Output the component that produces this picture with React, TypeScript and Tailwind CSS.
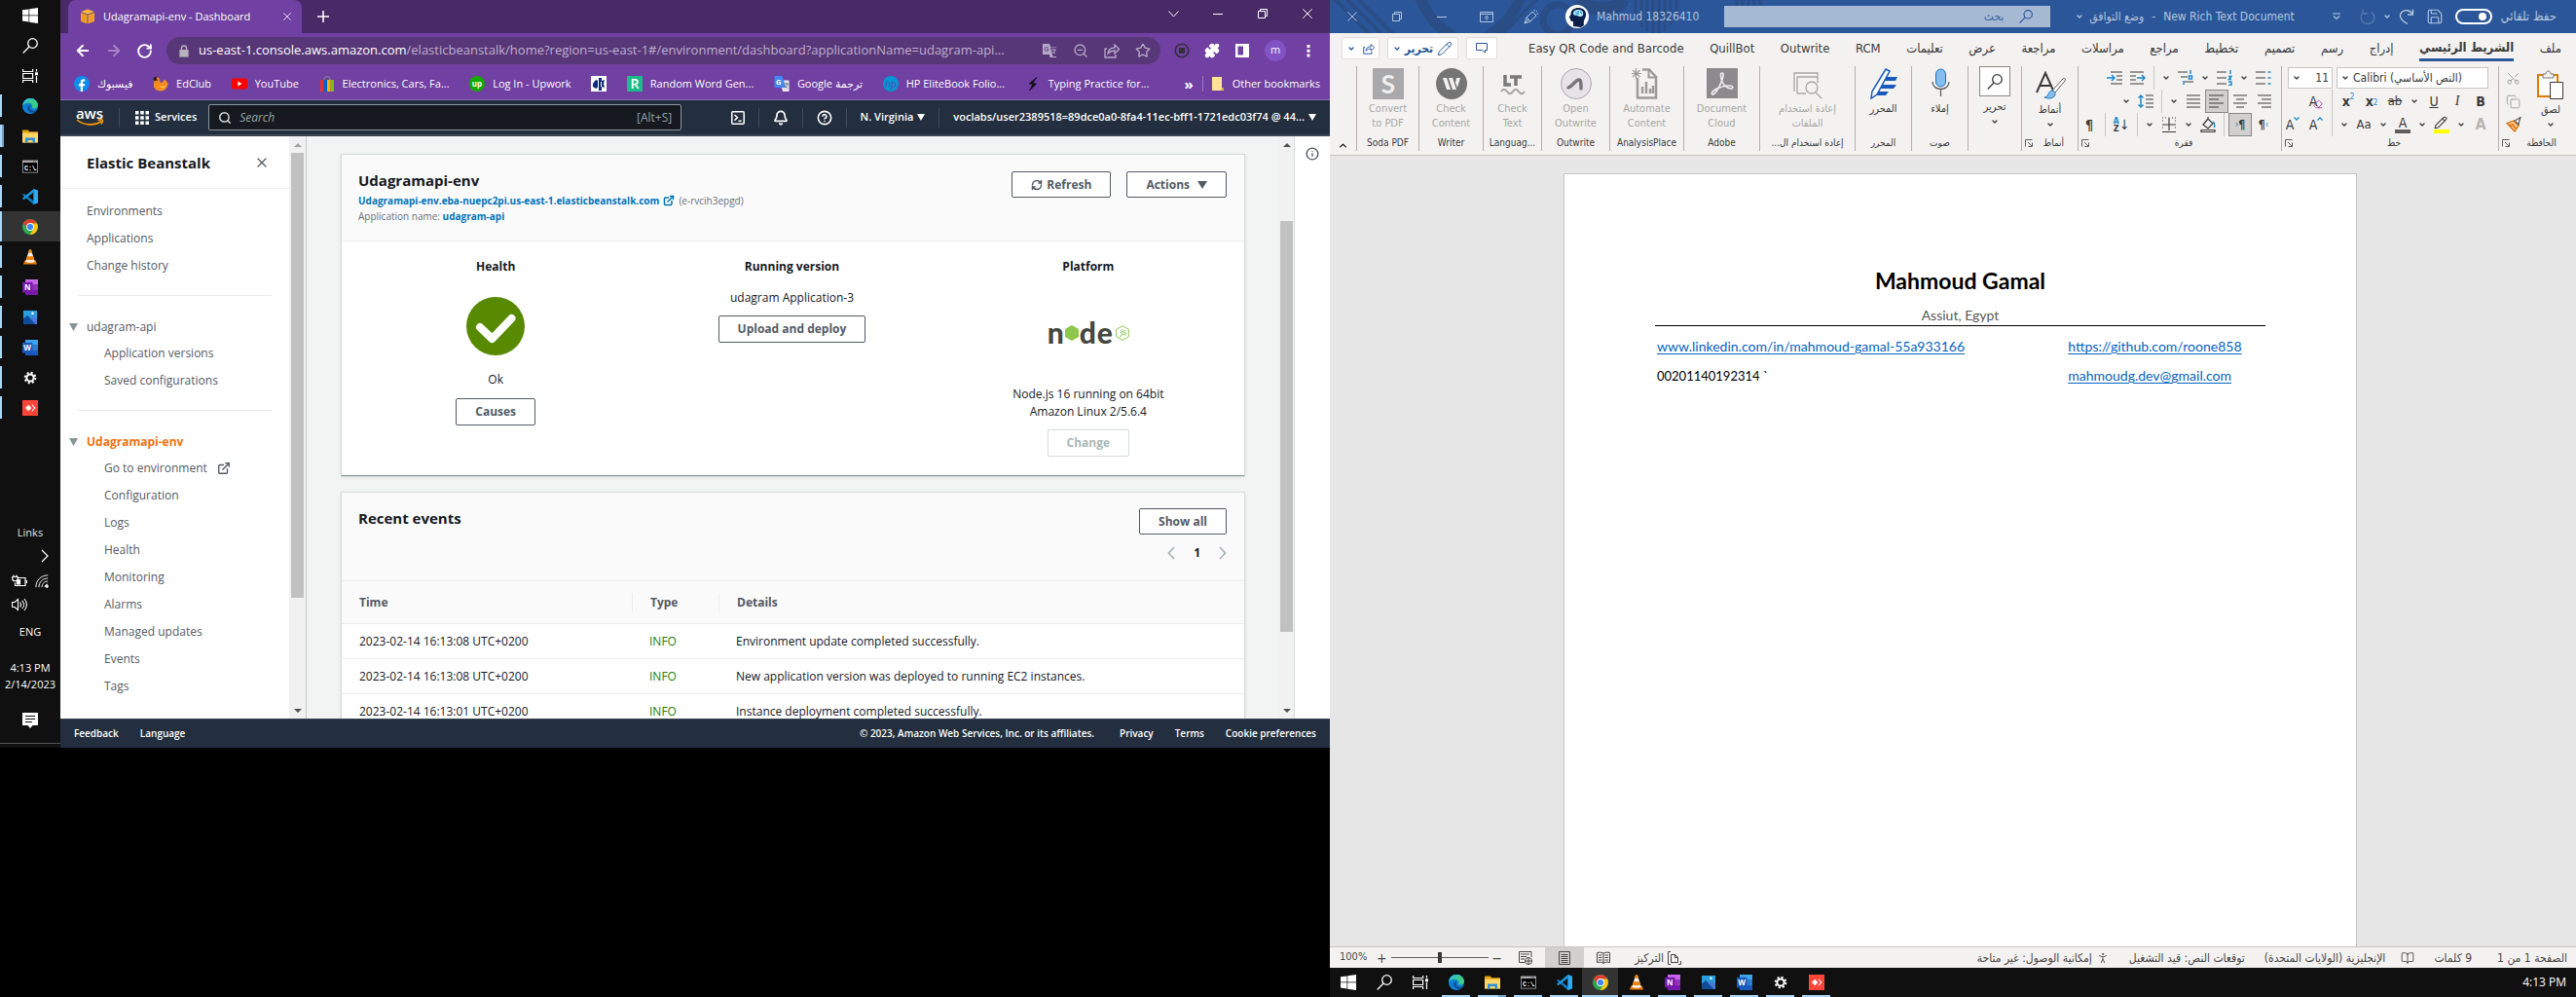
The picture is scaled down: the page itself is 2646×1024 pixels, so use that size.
import React from "react";
import {
  ArrowLeft,
  ArrowRight,
  Bell,
  ChevronDown,
  ChevronUp,
  CircleHelp,
  Copy,
  ExternalLink,
  Eraser,
  Info,
  Pencil,
  PersonStanding,
  Puzzle,
  RefreshCw,
  RotateCw,
  Save,
  Scissors,
  Search,
  Star,
  X,
  ZoomOut,
  BookOpen,
} from "lucide-react";

/* ---------- application icons ---------- */

type IconProps = { className?: string };

const WindowsIcon = () => (
  <svg viewBox="0 0 16 16" className="size-4" fill="#fff">
    <path d="M0 2.300 6.500 1.400v6.200H0zM7.200 1.300 16 0v7.600H7.200zM0 8.300h6.500v6.200L0 13.600zM7.200 8.300H16V16l-8.800-1.300z" />
  </svg>
);

const LoupeIcon = ({ className = "size-4" }: IconProps) => (
  <svg viewBox="0 0 16 16" className={className} fill="none" stroke="currentColor" strokeWidth="1.300">
    <circle cx="10.500" cy="5.500" r="4.800" />
    <path d="M7 9 0.700 15.500" />
  </svg>
);

const TaskViewIcon = () => (
  <svg viewBox="0 0 16 16" className="size-4" fill="none" stroke="#fff" strokeWidth="1.200">
    <path d="M.6 1v2.500h10V1M.6 15v-2.500h10V15M.6 5.500h10v5H.6zM14.500 1v2.500M14.500 8v7" />
    <path d="M13 4.300h3v3h-3z" fill="#fff" stroke="none" />
  </svg>
);

const EdgeIcon = () => (
  <svg viewBox="0 0 16 16" className="size-4">
    <circle cx="8" cy="8" r="8" fill="#0f7fd6" />
    <path d="M.2 7C1 2.800 4.300 0 8 0c5 0 8 3.600 8 6.800 0 2.400-1.800 3.600-3.800 3.600-1.600 0-2.500-.6-2.200-1.300C11 7 9 4.800 6.200 4.800 3.600 4.800 1.200 6 .2 7z" fill="#3ccb8c" />
    <path d="M.2 7C1 2.800 4.300 0 8 0c1.600 0 3 .4 4 1-4-.4-8 2-11.800 6z" fill="#34bfe0" />
    <path d="M5.200 9.500c0 3 2.500 5.500 5.800 5.200 1.600-.2 3-1.200 4-2.700-4 2-8 .5-7.500-3.200.1-.8.500-1.300 1-1.700-2 0-3.300 1-3.300 2.400z" fill="#114a8b" />
  </svg>
);

const ExplorerIcon = () => (
  <svg viewBox="0 0 16 16" className="size-4">
    <path d="M0 1.500h6l1 1.800h9v11H0z" fill="#e5a00d" />
    <path d="M0 4.500h16V14.500H0z" fill="#ffd766" />
    <path d="M3 14.500V9.500h10v5h-2.500V12h-5v2.500z" fill="#2d8fd8" />
  </svg>
);

const TerminalIcon = () => (
  <svg viewBox="0 0 16 16" className="size-4">
    <path d="M0 1.500h16v13H0z" fill="#a8a8a8" />
    <path d="M.8 4h14.400v9.700H.8z" fill="#000" />
    <path d="M11 2.300h1v1h-1zM13 2.300h1v1h-1z" fill="#333" />
    <text x="2" y="11.500" fontSize="6.500" fontFamily="Liberation Mono" fontWeight="700" fill="#fff">C:\</text>
    <path d="M12 10.800h2.500v1H12z" fill="#fff" />
  </svg>
);

const VsCodeIcon = () => (
  <svg viewBox="0 0 16 16" className="size-4">
    <path d="M11.500 0 16 1.800v12.400L11.500 16 0 6.200l1.500-1.400 10 7.600z" fill="#0a7bc4" />
    <path d="M11.500 3.600 1.500 11.200 0 9.800 11.500 0z" fill="#1b9ae0" />
    <path d="M11.500 0 16 1.800v12.400L11.500 16z" fill="#2faaf2" />
  </svg>
);

const ChromeIcon = () => (
  <svg viewBox="0 0 16 16" className="size-4">
    <circle cx="8" cy="8" r="8" fill="#2da94f" />
    <path d="M8 4.200h6.900A8 8 0 0 1 7.700 16l3.600-6.100z" fill="#fdc60a" />
    <path d="M1.100 4A8 8 0 0 1 14.900 4.200H8L4.600 9.900z" fill="#e33b2e" />
    <circle cx="8" cy="8" r="3.900" fill="#fff" />
    <circle cx="8" cy="8" r="3.100" fill="#4286f5" />
  </svg>
);

const VlcIcon = () => (
  <svg viewBox="0 0 16 16" className="size-4">
    <path d="M2.300 11.500h11.400l1.300 4H1z" fill="#e87b00" />
    <path d="M7 .5h2l3.800 12.200c-1.500 1.300-8.100 1.300-9.600 0z" fill="#f4f0ec" />
    <path d="M7 .5h2l1 3.200H6zM4.900 7.200h6.200l1 3.200c-2 .8-6.200.8-8.200 0z" fill="#f08000" />
  </svg>
);

const OfficeTile = ({ letter, dark, mid, light }: { letter: string; dark: string; mid: string; light: string }) => (
  <svg viewBox="0 0 16 16" className="size-4">
    <path d="M3 0h13v16H3z" fill={mid} />
    <path d="M3 0h13v5H3z" fill={light} />
    <path d="M3 11h13v5H3z" fill={dark} />
    <path d="M0 2.800h10.400v10.600H0z" fill={dark} />
    <text x="5.200" y="11" fontSize="8" fontWeight="700" fontFamily="Open Sans" fill="#fff" textAnchor="middle">{letter}</text>
  </svg>
);

const PhotosIcon = () => (
  <svg viewBox="0 0 16 16" className="size-4">
    <path d="M1 1h14v14H1z" fill="#2a9fe0" />
    <path d="m1 9.500 4-3.800L14 15H1z" fill="#0f4c9a" />
    <path d="m8 9 3-3 4 4v5h-1.500z" fill="#4a78d8" />
    <circle cx="10.500" cy="3.800" r="1.200" fill="#fff" />
  </svg>
);

const GearIcon = () => (
  <svg viewBox="0 0 16 16" className="size-4" fill="none" stroke="#fff">
    <circle cx="8" cy="8" r="3.600" strokeWidth="2" />
    <circle cx="8" cy="8" r="5.300" strokeWidth="2" strokeDasharray="2.080 2.080" />
  </svg>
);

const AnyDeskIcon = () => (
  <svg viewBox="0 0 16 16" className="size-4">
    <path d="M0 0h16v16H0z" fill="#ff4438" />
    <path d="m6.200 4.800 3.200 3.200-3.200 3.200L3 8z" fill="#fff" />
    <path d="m9.300 4.800 1-.3L13.500 8l-3.200 3.400-1-.2L12 8z" fill="#fff" />
  </svg>
);

const pinned = [
  { name: "Start", icon: <WindowsIcon />, state: "none" },
  { name: "Search", icon: <span className="text-white"><LoupeIcon /></span>, state: "none" },
  { name: "Task View", icon: <TaskViewIcon />, state: "none" },
  { name: "Edge", icon: <EdgeIcon />, state: "open" },
  { name: "File Explorer", icon: <ExplorerIcon />, state: "multi" },
  { name: "Command Prompt", icon: <TerminalIcon />, state: "open" },
  { name: "Visual Studio Code", icon: <VsCodeIcon />, state: "open" },
  { name: "Chrome", icon: <ChromeIcon />, state: "active" },
  { name: "VLC", icon: <VlcIcon />, state: "open" },
  { name: "OneNote", icon: <OfficeTile letter="N" dark="#7719aa" mid="#9332bf" light="#ca64ea" />, state: "open" },
  { name: "Photos", icon: <PhotosIcon />, state: "open" },
  { name: "Word", icon: <OfficeTile letter="W" dark="#185abd" mid="#2b7cd3" light="#41a5ee" />, state: "open" },
  { name: "Settings", icon: <GearIcon />, state: "open" },
  { name: "AnyDesk", icon: <AnyDeskIcon />, state: "open" },
];

/* ---------- side taskbar ---------- */

function SideTaskbar() {
  return (
    <nav aria-label="Taskbar" className="flex w-[62px] shrink-0 flex-col bg-[#101010] text-[11px] text-white">
      {pinned.map((p) => (
        <button
          key={p.name}
          aria-label={p.name}
          className={
            p.state === "active"
              ? "relative flex h-[31px] shrink-0 items-center justify-center bg-[#333333]"
              : "relative flex h-[31px] shrink-0 items-center justify-center"
          }
        >
          {p.icon}
          {p.state === "active" && <span className="absolute inset-y-0 left-0 w-[2px] bg-[#a6d8ff]" />}
          {p.state === "open" && <span className="absolute inset-y-1 left-0 w-[2px] bg-[#a6d8ff]" />}
          {p.state === "multi" && (
            <span className="absolute inset-y-1 left-0 w-1 border-l-2 border-[#a6d8ff] bg-[#76a2c4]" />
          )}
        </button>
      ))}
      <div className="flex-1" />
      <div className="text-center leading-5 text-[#e4e4e4]">Links</div>
      <button aria-label="Show hidden icons" className="flex h-7 items-center justify-end pr-3">
        <svg viewBox="0 0 8 14" className="h-[14px] w-2" fill="none" stroke="#fff" strokeWidth="1.200"><path d="m1 1 6 6-6 6" /></svg>
      </button>
      <div className="flex h-6 items-center justify-between px-3">
        <svg viewBox="0 0 16 16" className="size-4" fill="none" stroke="#fff" strokeWidth="1.200">
          <path d="M6 4.500h8v8H3.500V9.500M15.500 7v3M2 1.500v2M5 1.500v2M.8 3.500h5.400v2c0 3-5.400 3-5.400 0z" />
          <path d="M5.500 6.500h3v4.500h-3z" fill="#fff" />
        </svg>
        <svg viewBox="0 0 16 16" className="size-[14px]" fill="none" stroke="#fff" strokeWidth="1.100">
          <path d="M1 15C1 7 7 1 15 1M4.500 15c0-6 4.500-10.500 10.500-10.500M8 15c0-4 3-7 7-7M11.500 15c0-2 1.500-3.500 3.500-3.500" />
          <circle cx="14" cy="14" r="1.300" fill="#fff" />
        </svg>
      </div>
      <div className="flex h-6 items-center px-3">
        <svg viewBox="0 0 16 16" className="size-4" fill="none" stroke="#fff" strokeWidth="1.100">
          <path d="M.6 5.500h2.600L6.500 2.500v11L3.200 10.500H.6zM8.500 5.500c1.300 1.500 1.300 3.500 0 5M10.700 3.800c2.400 2.500 2.400 6 0 8.400M13 2c3.200 3.500 3.200 8.500 0 12" />
        </svg>
      </div>
      <div className="pt-[6px] pb-2 text-center leading-5">ENG</div>
      <div className="pt-[10px] text-center leading-[17px]">
        4:13 PM
        <br />
        2/14/2023
      </div>
      <button aria-label="Notifications" className="mt-[10px] flex h-[38px] items-center justify-center">
        <svg viewBox="0 0 16 16" className="size-4">
          <path d="M0 0h16v13h-5.500L8 16l-2.500-3H0z" fill="#fff" />
          <path d="M3 3.500h10M3 6.500h10M3 9.500h7" stroke="#101010" strokeWidth="1.200" />
        </svg>
      </button>
      <div className="mt-1 h-[5px] border-t border-[#555]" />
    </nav>
  );
}

/* ---------- browser ---------- */

const FacebookIcon = () => (
  <svg viewBox="0 0 16 16" className="size-4">
    <circle cx="8" cy="8" r="8" fill="#0d8bf0" />
    <path d="M6.800 16v-5.500H4.900V8.100h1.900V6.600c0-2.200 1.100-3.300 3-3.300.7 0 1.300.1 1.500.1v2.100h-1.100c-.9 0-1.200.5-1.200 1.200v1.400h2.200l-.4 2.400H9V16z" fill="#fff" />
  </svg>
);
const EdClubIcon = () => (
  <svg viewBox="0 0 16 16" className="size-4">
    <path d="M1 3c1-2 4-2.500 5-1 1 1.300.5 3.500 2 4.500 2 1 3-1 3.500-3 2 1 3.500 2 3 3.500 1 0 1.500.5 1.500 1-1 .5-1 2-1.500 3.500-1 2.500-4 4-6.500 4S1.500 14 1 11 2 6 1 3z" fill="#f58a1f" />
    <path d="M.5 3.500C.5 1.500 2.500.5 4.500.8L3.500 3l2 1.500-4 .5z" fill="#2a1a14" />
    <path d="M6 9c2 2.500 5.500 2.500 8 0-1 4-6 5-8 0z" fill="#ffc04a" />
  </svg>
);
const YouTubeIcon = () => (
  <svg viewBox="0 0 16 16" className="size-4">
    <rect y="2.500" width="16" height="11" rx="2" fill="#f00" />
    <path d="m6.300 5.600 4.200 2.400-4.200 2.400z" fill="#fff" />
  </svg>
);
const BagIcon = () => (
  <svg viewBox="0 0 16 16" className="size-4">
    <path d="M5 5V3c0-3 6-3 6 0v2" fill="none" stroke="#8a8a8a" />
    <path d="M1 4h3.500v12H1z" fill="#e53238" />
    <path d="M4.500 4H8v12H4.500z" fill="#0064d2" />
    <path d="M8 4h3.500v12H8z" fill="#f5af02" />
    <path d="M11.500 4H15v12h-3.500z" fill="#86b817" />
  </svg>
);
const UpworkIcon = () => (
  <svg viewBox="0 0 16 16" className="size-4">
    <circle cx="8" cy="8" r="8" fill="#14a800" />
    <text x="8" y="10.500" fontSize="8" fontWeight="700" fontFamily="Open Sans" fill="#fff" textAnchor="middle">up</text>
  </svg>
);
const FistIcon = () => (
  <svg viewBox="0 0 16 16" className="size-4">
    <path d="M0 0h16v16H0z" fill="#fff" />
    <path d="m2 8 3-4 3 1V2h3v3l3-1-1 4 1 4-3-1v4H8v-4l-3 2-3-2z" fill="#0d2a78" />
    <path d="M7 4h1v8H7zM10 6h1v5h-1z" fill="#fff" />
  </svg>
);
const RIcon = () => (
  <svg viewBox="0 0 16 16" className="size-4">
    <path d="M0 0h16v16H0z" fill="#1abc8c" />
    <text x="8" y="13" fontSize="14" fontFamily="Open Sans" fontWeight="600" fill="#fff" textAnchor="middle">R</text>
  </svg>
);
const TranslateIcon = () => (
  <svg viewBox="0 0 16 16" className="size-4">
    <path d="M6 4.500h9.500V16H9z" fill="#e4e6ea" />
    <path d="M.5 0h8l3.500 12H.5z" fill="#4285f4" />
    <text x="4.800" y="8.800" fontSize="7.500" fontWeight="700" fontFamily="Open Sans" fill="#fff" textAnchor="middle">G</text>
    <path d="M10 8h5M12.500 7v1M14 8c-.5 2-2 3.500-3 4M11 9.500c.5 1.300 2 2.500 3 3" stroke="#5b6b7b" fill="none" strokeWidth=".9" />
  </svg>
);
const TranslatePageIcon = () => (
  <svg viewBox="0 0 16 16" className="size-4">
    <path d="M1 1h7l1 3h6v11H8.500L8 12H1z" fill="#b8a8c8" />
    <path d="m9 4.500 2.500 9.500H15V4.500z" fill="#573778" />
    <path d="M10.500 7h4M12.500 6v1M14 7c-.3 1.800-1.500 3-2.500 3.500M11.500 8.500c.4 1.200 1.500 2.200 2.500 2.700" stroke="#b8a8c8" fill="none" />
    <path d="M6.700 5.200C5.500 3.800 3 4.300 3 6.500s2.500 2.700 3.500 1.500c.3-.4.3-.9.300-1.300H5" stroke="#573778" fill="none" />
  </svg>
);
const HpIcon = () => (
  <svg viewBox="0 0 16 16" className="size-4">
    <circle cx="8" cy="8" r="8" fill="#0096d6" />
    <text x="8" y="11.500" fontSize="10" fontStyle="italic" fontFamily="Open Sans" fill="#5a4bb0" textAnchor="middle">hp</text>
  </svg>
);
const BoltIcon = () => (
  <svg viewBox="0 0 16 16" className="size-4">
    <path d="M12 1.500 4 8l4 .3L4.500 15l7-7-4-.5z" fill="#0c0c14" stroke="#0c0c14" strokeWidth=".6" />
  </svg>
);
const BookmarkFolder = () => (
  <svg viewBox="0 0 12 14" className="h-[14px] w-3">
    <path d="M0 0h10v11l2 1v2H0z" fill="#fde293" />
    <path d="M10 11l2 1v2h-3z" fill="#e0b840" />
  </svg>
);

const bookmarks = [
  { label: "فيسبوك", icon: <FacebookIcon /> },
  { label: "EdClub", icon: <EdClubIcon /> },
  { label: "YouTube", icon: <YouTubeIcon /> },
  { label: "Electronics, Cars, Fa...", icon: <BagIcon /> },
  { label: "Log In - Upwork", icon: <UpworkIcon /> },
  { label: "", icon: <FistIcon /> },
  { label: "Random Word Gen...", icon: <RIcon /> },
  { label: "Google ترجمة", icon: <TranslateIcon /> },
  { label: "HP EliteBook Folio...", icon: <HpIcon /> },
  { label: "Typing Practice for...", icon: <BoltIcon /> },
];

const RestoreIcon = ({ className = "size-[10px]" }: IconProps) => (
  <svg viewBox="0 0 10 10" className={className} fill="none" stroke="currentColor">
    <path d="M.5 2.500h7v7h-7zM2.500 2.500v-2h7v7h-2" />
  </svg>
);
const MinimizeIcon = () => (
  <svg viewBox="0 0 10 10" className="size-[10px]" stroke="currentColor">
    <path d="M0 5.500h10" />
  </svg>
);
const CloseIcon = ({ className = "size-[10px]" }: IconProps) => (
  <svg viewBox="0 0 10 10" className={className} stroke="currentColor">
    <path d="m.3.3 9.400 9.400M9.700.3.3 9.700" />
  </svg>
);
const ShareIcon = ({ className = "size-4" }: IconProps) => (
  <svg viewBox="0 0 16 16" className={className} fill="none" stroke="currentColor" strokeWidth="1.300">
    <path d="M3 6H1v9h11v-3M4 11c.5-4 3-6 7-6V2l4.500 4.500L11 11V8C8 8 6 9 4 11z" />
  </svg>
);

function BrowserChrome() {
  return (
    <header className="text-white">
      <div className="flex h-[34px] items-center bg-[#472a66] pl-2">
        <div className="flex h-full w-60 items-center rounded-t-lg bg-[#7040a2] pr-[11px] pl-3 text-[11px]">
          <svg viewBox="0 0 16 16" className="size-4">
            <path d="m1 3 7-2.500L15 3 8 5.500z" fill="#f9b83a" />
            <path d="M1 4l6.500 2.300V15.500L1 13zM15 4 8.500 6.300v9.200L15 13z" fill="#f0a22a" />
            <path d="M4 5v9M12 5v9" stroke="#e08f1a" />
          </svg>
          <span className="ml-2 flex-1">Udagramapi-env - Dashboard</span>
          <button aria-label="Close tab"><CloseIcon className="size-2" /></button>
        </div>
        <button aria-label="New tab" className="ml-4">
          <svg viewBox="0 0 12 12" className="size-3" stroke="#fff" strokeWidth="1.600"><path d="M6 0v12M0 6h12" /></svg>
        </button>
        <div className="flex-1" />
        <div className="flex h-full items-start pt-[9px]">
          <button aria-label="Search tabs" className="flex w-[46px] justify-center pt-[2px]">
            <svg viewBox="0 0 11 7" className="h-[7px] w-[11px]" fill="none" stroke="#fff"><path d="m.5.500 5 5.500 5-5.500" /></svg>
          </button>
          <button aria-label="Minimize" className="flex w-[46px] justify-center"><MinimizeIcon /></button>
          <button aria-label="Restore" className="flex w-[46px] justify-center"><RestoreIcon /></button>
          <button aria-label="Close" className="flex w-[46px] justify-center"><CloseIcon /></button>
        </div>
      </div>
      <div className="flex h-9 items-center gap-[14px] bg-[#7040a2] px-[14px]">
        <button aria-label="Back"><ArrowLeft className="size-[18px]" strokeWidth={2.5} /></button>
        <button aria-label="Forward" className="text-[#a585c6]"><ArrowRight className="size-[18px]" strokeWidth={2.5} /></button>
        <button aria-label="Reload"><RotateCw className="size-[17px]" strokeWidth={2.7} /></button>
        <div className="flex h-7 min-w-0 flex-1 items-center rounded-full bg-[#573778] pr-[10px] pl-3">
          <svg viewBox="0 0 12 14" className="h-[13px] w-3 shrink-0"><path d="M1 5.500h10V13.500H1z" fill="#b9b3bd" /><path d="M3.300 6V3.500c0-3.300 5.400-3.300 5.400 0V6" fill="none" stroke="#b9b3bd" strokeWidth="1.500" /></svg>
          <div role="textbox" aria-label="Address" tabIndex={0} className="ml-[9px] flex-1 text-[13px] whitespace-nowrap text-[#c0afd0]">
            <span className="text-white">us-east-1.console.aws.amazon.com</span>
            /elasticbeanstalk/home?region=us-east-1#/environment/dashboard?applicationName=udagram-api...
          </div>
          <div className="flex gap-4 text-[#b8a8c8]">
            <button aria-label="Translate"><TranslatePageIcon /></button>
            <button aria-label="Zoom"><ZoomOut className="size-4" /></button>
            <button aria-label="Share"><ShareIcon /></button>
            <button aria-label="Bookmark"><Star className="size-4" /></button>
          </div>
        </div>
        <div className="flex items-center gap-[15px]">
          <button aria-label="Recorder extension">
            <svg viewBox="0 0 16 16" className="size-4">
              <circle cx="8" cy="8" r="6.800" fill="none" stroke="#33303a" strokeWidth="1.600" />
              <path d="M5 5h6v6H5z" fill="#33303a" />
            </svg>
          </button>
          <button aria-label="Extensions"><Puzzle className="size-4 fill-white" /></button>
          <button aria-label="Side panel">
            <svg viewBox="0 0 16 16" className="size-4"><path d="M1 1h14v14H1zM3.500 3.500v9H9v-9z" fill="#fff" fillRule="evenodd" /></svg>
          </button>
          <button aria-label="Profile" className="flex size-[22px] items-center justify-center rounded-full bg-[#8153c4] pb-px text-[11px]">m</button>
          <button aria-label="Menu">
            <svg viewBox="0 0 16 16" className="size-4" fill="#fff"><path d="M6.500 2h3v3h-3zM6.500 6.700h3v3h-3zM6.500 11.400h3v3h-3z" /></svg>
          </button>
        </div>
      </div>
      <div className="flex h-[33px] items-center border-b border-[#8f6cb5] bg-[#7040a2] pr-[10px] pl-[14px] text-[11px]">
        <div className="mr-9 flex min-w-0 flex-1 items-center justify-between whitespace-nowrap">
          {bookmarks.map((b, i) => (
            <a key={i} href="#bookmark" aria-label={b.label || "Bookmark"} className="flex items-center gap-2">
              {b.icon}
              {b.label && <span dir="ltr">{b.label}</span>}
            </a>
          ))}
        </div>
        <button className="text-[15px] leading-4 font-bold">»</button>
        <div className="mx-[9px] h-4 w-px bg-[#9a7bbd]" />
        <a href="#other" className="flex items-center gap-[9px] whitespace-nowrap"><BookmarkFolder />Other bookmarks</a>
      </div>
    </header>
  );
}

/* ---------- AWS console ---------- */

const Caret = ({ className = "h-[7px] w-2 shrink-0" }: IconProps) => (
  <svg viewBox="0 0 10 8" preserveAspectRatio="none" className={className} fill="currentColor"><path d="M0 0h10L5 8z" /></svg>
);

function AwsNav() {
  const sep = <div className="h-5 w-px bg-[#414d5c]" />;
  return (
    <nav className="flex h-[37px] shrink-0 items-center border-b-2 border-[#3c4654] bg-[#232f3e] pr-[14px] pl-4 text-[11px] font-semibold whitespace-nowrap text-white">
      <a href="#aws" aria-label="AWS" className="flex w-7 flex-col items-center text-[15px] leading-[11px]">
        <span>aws</span>
        <svg viewBox="0 0 28 8" className="h-2 w-7" fill="none" stroke="#f90" strokeWidth="1.600">
          <path d="M1 1c7 6 18 6.500 25 1.500M22.500 1.500c2-.7 4.500-.8 4.800 0s-.3 2.500-1.500 4" />
        </svg>
      </a>
      <div className="mx-4 h-5 w-px bg-[#414d5c]" />
      <button className="flex items-center gap-[6px]">
        <svg viewBox="0 0 14 14" className="size-[14px]" fill="#fff">
          <path d="M0 0h3.500v3.500H0zM5.250 0h3.500v3.500h-3.500zM10.500 0H14v3.500h-3.500zM0 5.250h3.500v3.500H0zM5.250 5.250h3.500v3.500h-3.500zM10.500 5.250H14v3.500h-3.500zM0 10.500h3.500V14H0zM5.250 10.500h3.500V14h-3.500zM10.500 10.500H14V14h-3.500z" />
        </svg>
        Services
      </button>
      <label className="ml-3 flex h-[27px] w-[486px] items-center rounded-xs border border-[#8b96a0] bg-[#16191f] px-[9px] font-normal text-[#95a0aa]">
        <Search className="size-[14px] text-[#d5dbdb]" strokeWidth={2.5} />
        <input aria-label="Search" placeholder="Search" className="ml-2 min-w-0 flex-1 bg-transparent text-xs italic placeholder:text-[#95a5a6]" />
        <span className="text-xs">[Alt+S]</span>
      </label>
      <div className="flex-1" />
      <div className="flex items-center gap-[14px]">
        <button aria-label="CloudShell">
          <svg viewBox="0 0 14 14" className="size-[14px]" fill="none" stroke="#fff" strokeWidth="1.500">
            <rect x=".8" y=".8" width="12.400" height="12.400" rx="1" />
            <path d="m3.500 4 3 2.800-3 2.800M7.500 10.200h3" />
          </svg>
        </button>
        {sep}
        <button aria-label="Notifications"><Bell className="size-4" strokeWidth={2.6} /></button>
        {sep}
        <button aria-label="Help"><CircleHelp className="size-4" strokeWidth={2.4} /></button>
        {sep}
        <button className="flex items-center gap-1">N. Virginia <Caret /></button>
        {sep}
        <button className="flex items-center gap-1">voclabs/user2389518=89dce0a0-8fa4-11ec-bff1-1721edc03f74 @ 44... <Caret /></button>
      </div>
    </nav>
  );
}

const envLinks = ["Configuration", "Logs", "Health", "Monitoring", "Alarms", "Managed updates", "Events", "Tags"];

const TreeCaret = () => (
  <svg viewBox="0 0 9 8" className="-ml-[9px] h-2 w-[9px]" fill="#879596"><path d="M0 0h9L4.500 8z" /></svg>
);

const ScrollArrow = ({ up, className }: { up?: boolean; className: string }) => (
  <div className={className}>
    <svg viewBox="0 0 8 4" className="h-1 w-2" fill="currentColor"><path d={up ? "M0 4h8L4 0z" : "M0 0h8L4 4z"} /></svg>
  </div>
);

function ConsoleSidebar() {
  return (
    <aside className="flex w-[253px] shrink-0 border-r border-[#c6cccc] bg-white text-[#545b64]">
      <div className="flex-1 overflow-hidden text-xs">
        <div className="flex h-[54px] items-center justify-between border-b border-[#eaeded] pr-5 pl-[27px]">
          <h2 className="text-[15px] font-bold text-[#16191f]">Elastic Beanstalk</h2>
          <button aria-label="Close navigation"><X className="size-4" strokeWidth={1.8} /></button>
        </div>
        <ul className="mx-[18px] border-b border-[#eaeded] pt-[9px] pb-4 pl-[9px] leading-7">
          <li><a href="#environments">Environments</a></li>
          <li><a href="#applications">Applications</a></li>
          <li><a href="#history">Change history</a></li>
        </ul>
        <div className="mx-[18px] border-b border-[#eaeded] pt-[18px] pb-4 pl-[9px] leading-7">
          <button className="flex items-center gap-[9px] leading-[27px]"><span className="-ml-[9px]"><TreeCaret /></span>udagram-api</button>
          <ul className="pl-[18px]">
            <li><a href="#versions">Application versions</a></li>
            <li><a href="#saved">Saved configurations</a></li>
          </ul>
        </div>
        <div className="mx-[18px] pt-[18px] pl-[9px] leading-7">
          <button className="flex items-center gap-[9px] leading-[27px] font-bold text-[#ec7211]"><span className="-ml-[9px]"><TreeCaret /></span>Udagramapi-env</button>
          <ul className="pl-[18px]">
            <li><a href="#goto" className="flex items-center gap-[10px]">Go to environment <ExternalLink className="size-[14px]" strokeWidth={2.4} /></a></li>
            {envLinks.map((l) => (
              <li key={l}><a href="#env">{l}</a></li>
            ))}
          </ul>
        </div>
      </div>
      <div className="flex w-[17px] flex-col items-center bg-[#f1f1f1]">
        <ScrollArrow up className="flex h-[17px] items-center text-[#a3a3a3]" />
        <div className="h-[457px] w-[13px] bg-[#c1c1c1]" />
        <div className="flex-1" />
        <ScrollArrow className="flex h-[17px] items-center text-[#505050]" />
      </div>
    </aside>
  );
}

const btn = "flex items-center justify-center rounded-xs border border-[#545b64] bg-white px-[19px] text-xs font-bold text-[#545b64]";

const events = [
  ["2023-02-14 16:13:08 UTC+0200", "Environment update completed successfully."],
  ["2023-02-14 16:13:08 UTC+0200", "New application version was deployed to running EC2 instances."],
  ["2023-02-14 16:13:01 UTC+0200", "Instance deployment completed successfully."],
];

function NodeLogo() {
  return (
    <div role="img" aria-label="node js" className="flex h-6 items-end justify-center gap-px font-['Lato'] text-[30px] leading-[20px] font-black text-[#46483e]">
      <span>n</span>
      <svg viewBox="0 0 14 16" className="mb-px h-4 w-[14px]"><path d="m7 0 7 4v8l-7 4-7-4V4z" fill="#8cc84b" /></svg>
      <span>d</span>
      <span>e</span>
      <svg viewBox="0 0 14 16" className="mb-px ml-[2px] h-4 w-[14px]" fill="none" stroke="#8cc84b">
        <path d="m7 .7 6.300 3.600v7.400L7 15.300.7 11.700V4.300z" />
        <path d="M6 4.500v6c0 1-1.500 1.200-2.200.4M10.500 6c-1-.8-3-.6-3 .5 0 1.400 3.200.8 3.200 2.300 0 1.400-2.600 1.400-3.500.4" />
      </svg>
    </div>
  );
}

function ConsoleMain() {
  return (
    <main className="min-w-0 flex-1 overflow-hidden bg-[#f2f3f3] px-[35px] pt-[18px] text-xs text-[#16191f]">
      <section className="border-t border-r border-b border-l border-[#d5dbdb] border-b-[#879596] bg-white shadow-sm">
        <div className="flex h-[89px] items-start justify-between border-b border-[#eaeded] bg-[#fafafa] pt-4 pr-[18px] pl-[17px]">
          <div className="text-[10px] leading-4 text-[#687078]">
            <h1 className="text-[15px] leading-5 font-bold text-[#16191f]">Udagramapi-env</h1>
            <div className="flex items-center gap-1 pt-[3px]">
              <a href="#env" className="font-bold text-[#0073bb]">Udagramapi-env.eba-nuepc2pi.us-east-1.elasticbeanstalk.com</a>
              <ExternalLink className="size-3 text-[#0073bb]" strokeWidth={3} />
              <span>(e-rvcih3epgd)</span>
            </div>
            <div>Application name: <a href="#app" className="font-bold text-[#0073bb]">udagram-api</a></div>
          </div>
          <div className="flex gap-4 pt-px">
            <button className={btn + " h-[27px] gap-1"}><RefreshCw className="size-3" strokeWidth={3} />Refresh</button>
            <button className={btn + " h-[27px] gap-2"}>Actions <Caret className="h-2 w-[10px] shrink-0" /></button>
          </div>
        </div>
        <div className="grid h-60 grid-cols-3 pt-[17px] pr-2 pl-[6px] text-center">
          <div className="flex flex-col items-center">
            <h3 className="leading-[18px] font-bold">Health</h3>
            <svg viewBox="0 0 60 60" className="mt-[22px] size-[60px]">
              <circle cx="30" cy="30" r="30" fill="#578a00" />
              <path d="M14 31 26.500 43 46.500 22" fill="none" stroke="#fff" strokeWidth="8" strokeLinecap="round" strokeLinejoin="round" />
            </svg>
            <p className="mt-4 leading-[18px]">Ok</p>
            <button className={btn + " mt-[10px] h-7"}>Causes</button>
          </div>
          <div className="flex flex-col items-center">
            <h3 className="leading-[18px] font-bold">Running version</h3>
            <p className="mt-[14px] leading-[18px]">udagram Application-3</p>
            <button className={btn + " mt-[9px] h-7"}>Upload and deploy</button>
          </div>
          <div className="flex flex-col items-center">
            <h3 className="leading-[18px] font-bold">Platform</h3>
            <div className="mt-[44px]"><NodeLogo /></div>
            <p className="mt-[45px] leading-[18px]">Node.js 16 running on 64bit<br />Amazon Linux 2/5.6.4</p>
            <button disabled className="mt-[9px] flex h-7 items-center rounded-xs border border-[#d5dbdb] px-[19px] font-bold text-[#aab7b8]">Change</button>
          </div>
        </div>
      </section>
      <section className="mt-4 border border-[#d5dbdb] bg-[#fafafa] shadow-sm">
        <div className="flex h-[90px] items-start justify-between pt-4 pr-[18px] pl-[17px]">
          <h2 className="text-[15px] leading-5 font-bold">Recent events</h2>
          <div className="flex flex-col items-end">
            <button className={btn + " h-[27px]"}>Show all</button>
            <div className="mt-[10px] flex items-center gap-[19px] text-[#aab7b8]">
              <button aria-label="Previous page"><svg viewBox="0 0 8 14" className="h-[14px] w-2" fill="none" stroke="currentColor" strokeWidth="1.800"><path d="M7 1 1.500 7 7 13" /></svg></button>
              <span className="leading-[18px] font-bold text-[#16191f]">1</span>
              <button aria-label="Next page"><svg viewBox="0 0 8 14" className="h-[14px] w-2" fill="none" stroke="currentColor" strokeWidth="1.800"><path d="m1 1 5.500 6L1 13" /></svg></button>
            </div>
          </div>
        </div>
        <table className="w-full table-fixed border-t border-[#eaeded] text-left">
          <thead>
            <tr className="h-11 text-[#545b64]">
              <th className="w-[298px] pl-[18px] font-bold">Time</th>
              <th className="w-[89px]"><div className="border-l border-[#eaeded] pl-[18px] leading-5">Type</div></th>
              <th><div className="border-l border-[#eaeded] pl-[18px] leading-5">Details</div></th>
            </tr>
          </thead>
          <tbody className="bg-white">
            {events.map(([time, details]) => (
              <tr key={details} className="h-9 border-t border-[#eaeded]">
                <td className="pl-[18px]">{time}</td>
                <td className="pl-[18px] text-[#1d8102]">INFO</td>
                <td className="pl-[18px]">{details}</td>
              </tr>
            ))}
          </tbody>
        </table>
      </section>
    </main>
  );
}

function Browser() {
  return (
    <div className="flex min-w-0 flex-1 flex-col">
      <BrowserChrome />
      <AwsNav />
      <div className="flex min-h-0 flex-1">
        <ConsoleSidebar />
        <ConsoleMain />
        <div className="flex w-4 flex-col items-center border-r border-[#d5dbdb] bg-[#f1f1f1]">
          <ScrollArrow up className="flex h-[17px] items-center text-[#505050]" />
          <div className="mt-[70px] h-[422px] w-[13px] bg-[#c1c1c1]" />
          <div className="flex-1" />
          <ScrollArrow className="flex h-[17px] items-center text-[#505050]" />
        </div>
        <div className="flex w-9 justify-center bg-white pt-[11px] text-[#545b64]">
          <button aria-label="Info" className="h-[14px]"><Info className="size-[14px]" strokeWidth={2.4} /></button>
        </div>
      </div>
      <footer className="flex h-[30px] shrink-0 items-center gap-[22px] border-t border-[#3c4654] bg-[#232f3e] px-[14px] text-[10px] font-semibold text-white">
        <a href="#feedback">Feedback</a>
        <a href="#language">Language</a>
        <span className="ml-auto pr-1">© 2023, Amazon Web Services, Inc. or its affiliates.</span>
        <a href="#privacy">Privacy</a>
        <a href="#terms">Terms</a>
        <a href="#cookies">Cookie preferences</a>
      </footer>
    </div>
  );
}

/* ---------- word processor ---------- */

function WordTitleBar() {
  return (
    <header className="relative flex h-[34px] shrink-0 items-center overflow-hidden bg-[#2b579a] text-xs whitespace-nowrap text-[#b4c5df]">
      <svg aria-hidden="true" className="absolute inset-y-0 left-0 h-[34px] w-[500px]" viewBox="0 0 500 34" fill="none" stroke="#2a4d85">
        <path d="m0-6 44 44M12-6l44 44M24-6l44 44" strokeWidth="4" />
        <path d="M92-4c6 18 18 32 36 42M196-4c-6 18-18 32-36 42" strokeWidth="11" />
        <path d="m160 40 44-44M172 40l44-44" strokeWidth="3" />
        <circle cx="234" cy="20" r="15" strokeWidth="7" />
        <path d="M258 0c2 12 40 12 42 0" strokeWidth="14" />
        <path d="M314 0v22M320 0v28M326 0v32M332 0v34M338 0v34M344 0v32M350 0v26M356 0v20M418 0v14M424 0v14M430 0v14M436 0v10M442 0v6" strokeWidth="3" />
      </svg>
      <div className="relative flex w-full items-center pr-5">
        <div className="flex items-center">
          <button aria-label="Close" className="flex w-[46px] justify-center"><CloseIcon /></button>
          <button aria-label="Restore" className="flex w-[46px] justify-center"><RestoreIcon /></button>
          <button aria-label="Minimize" className="flex w-[46px] justify-center"><MinimizeIcon /></button>
          <button aria-label="Ribbon options" className="flex w-[46px] justify-center">
            <svg viewBox="0 0 14 11" className="h-[11px] w-[14px]" fill="none" stroke="currentColor"><path d="M.5.500h13v10H.5zM.5 2.500h13M7 9V4.500M5 6.500l2-2 2 2" /></svg>
          </button>
          <button aria-label="Drawing" className="flex w-[46px] justify-center">
            <svg viewBox="0 0 16 16" className="size-4" fill="none" stroke="currentColor"><path d="M1 15 3 9l6-6 4 4-6 6zM3 9l4 4M11 1l.5 1.500M14 2l-1 1M15 5h-1.500M1 15l4-4" /></svg>
          </button>
        </div>
        <button className="ml-3 flex items-center gap-2">
          <svg viewBox="0 0 24 24" className="size-6">
            <circle cx="12" cy="12" r="12" fill="#fff" />
            <path d="M8 22v-5c-3 0-3-1-3-3l-1.500-1 2-3C5.500 5 9 3 13.500 3 19 3 21.500 7 21 11c-.4 3-3 5-2 10l-3 2z" fill="#0b1f4b" />
            <path d="M8 9c0-3 3-4.500 6-4 3 .4 4.500 2 4.300 4.500-.2 2-2 2.500-3.500 2.500l-3-1c-2 0-3.800-.5-3.800-2z" fill="#bfeaff" />
            <path d="M10 8h3M13 6v4M15 7l2 2M10 10h2" stroke="#1596d8" strokeWidth="1.200" />
          </svg>
          <span>Mahmud 18326410</span>
        </button>
        <label className="ml-[26px] flex h-[22px] w-[335px] items-center justify-end gap-4 bg-[#a6b9d3] pr-[18px] text-[#2b579a]">
          <input dir="rtl" aria-label="بحث" placeholder="بحث" className="min-w-0 flex-1 bg-transparent text-xs placeholder:text-[#3c66a3]" />
          <LoupeIcon className="size-[14px]" />
        </label>
        <button className="ml-[26px] flex items-center gap-[6px]"><ChevronDown className="size-2" strokeWidth={4} /><span>وضع التوافق</span></button>
        <span className="px-2">-</span>
        <span>New Rich Text Document</span>
        <div className="flex-1" />
        <div className="flex items-center gap-2">
          <button aria-label="Customize" className="mr-3">
            <svg viewBox="0 0 8 8" className="size-2" fill="none" stroke="currentColor" strokeWidth="1.200"><path d="M0 1h8M1 3.500l3 3 3-3" /></svg>
          </button>
          <button aria-label="Repeat" className="text-[#5579ae]">
            <svg viewBox="0 0 16 16" className="size-4" fill="none" stroke="currentColor" strokeWidth="1.300"><path d="M3 .5v4.500h5M3.500 4C-2 9 3 15.500 8 15.500s10.500-7 3.500-12" /></svg>
          </button>
          <button aria-label="Undo options"><ChevronDown className="size-2" strokeWidth={4} /></button>
          <button aria-label="Undo">
            <svg viewBox="0 0 16 16" className="size-4" fill="none" stroke="currentColor" strokeWidth="1.300"><path d="M9 6h5.500V.5M14.500 6C12 1 6 .5 3 3.500S1 11 9 15.500" /></svg>
          </button>
          <button aria-label="Save" className="mx-1"><Save className="size-[18px]" strokeWidth={1.5} /></button>
          <input type="checkbox" role="switch" id="autosave" className="relative h-4 w-[38px] appearance-none rounded-full border-2 border-white after:absolute after:top-[2px] after:right-1 after:size-2 after:rounded-full after:bg-white" />
          <label htmlFor="autosave" className="text-[13px]">حفظ تلقائي</label>
        </div>
      </div>
    </header>
  );
}

const wordTabs = [
  "Easy QR Code and Barcode", "QuillBot", "Outwrite", "RCM", "تعليمات", "عرض", "مراجعة", "مراسلات", "مراجع", "تخطيط", "تصميم", "رسم", "إدراج",
];

function WordTabs() {
  const box = "flex h-[23px] items-center justify-center rounded-xs border border-[#e1dfdd] bg-white text-[#2b579a]";
  return (
    <nav className="flex h-[31px] shrink-0 items-center bg-[#f3f2f1] pr-[15px] pl-3 text-[13px] whitespace-nowrap text-[#3b3a39]">
      <button aria-label="Share" className={box + " w-[39px] gap-2"}><ChevronDown className="size-2" strokeWidth={4} /><ShareIcon className="size-3" /></button>
      <button className={box + " ml-2 w-[73px] gap-1 text-xs font-bold"}><ChevronDown className="size-2" strokeWidth={4} />تحرير<Pencil className="size-4" strokeWidth={1.5} /></button>
      <button aria-label="Comments" className={box + " ml-2 w-8"}>
        <svg viewBox="0 0 12 11" className="h-[11px] w-3" fill="none" stroke="currentColor"><path d="M.5.500h11v7H9.500v2.800L6.700 7.500H.5z" /></svg>
      </button>
      <div className="ml-8 flex h-full flex-1 items-center justify-between">
        {wordTabs.map((t) => <button key={t}>{t}</button>)}
        <button className="mt-px h-[26px] border-b-[3px] border-[#2b579a] font-bold">الشريط الرئيسي</button>
        <button>ملف</button>
      </div>
    </nav>
  );
}

const Launcher = () => (
  <svg viewBox="0 0 8 8" className="size-2 shrink-0" fill="none" stroke="#605e5c"><path d="M.5 7.500v-7h7M3 3l4 4M7.500 3.500v4h-4" /></svg>
);

function Group({ label, children, launcher }: { label: string; children?: React.ReactNode; launcher?: boolean }) {
  return (
    <section className="flex h-[87px] min-w-0 flex-col border-l border-[#b3b0ad]">
      <div className="min-h-0 flex-1">{children}</div>
      <div className="flex h-4 items-center px-[3px] text-[10px] leading-4 whitespace-nowrap text-[#3b3a39]">
        {launcher && <Launcher />}
        <span dir="auto" className="flex-1 text-center">{label}</span>
      </div>
    </section>
  );
}

function BigButton({ icon, lines, muted }: { icon: React.ReactNode; lines: string[]; muted?: boolean }) {
  return (
    <button className={muted ? "flex w-full flex-col items-center pt-[2px] text-[11px] leading-[15px] whitespace-nowrap text-[#a8a6a4]" : "flex w-full flex-col items-center pt-[2px] text-[11px] leading-[15px] whitespace-nowrap text-[#3b3a39]"}>
      <span className="flex h-[34px] items-start justify-center">{icon}</span>
      {lines.map((l) => <span key={l} dir="auto">{l}</span>)}
    </button>
  );
}

const SodaIcon = () => (
  <svg viewBox="0 0 32 32" className="size-8"><path d="M0 0h32v32H0z" fill="#a9a8aa" /><text x="16" y="26" fontSize="26" fontWeight="700" fontFamily="Lato" fill="#f0eff0" textAnchor="middle">S</text></svg>
);
const WriterIcon = () => (
  <svg viewBox="0 0 32 32" className="size-8"><circle cx="16" cy="16" r="16" fill="#757575" /><path d="M7 10h4l4 12h-4zM13 10h4l4 12h-4zM21 10h4l-3 10-2-5z" fill="#f3f2f1" /></svg>
);
const LanguageToolIcon = () => (
  <svg viewBox="0 0 32 32" className="size-8" fill="none" stroke="#7b7a7a">
    <path d="M8 7v10h6M13 9h12M19 9v9" strokeWidth="3.500" />
    <path d="M4 24c2-3 4-3 6 0s4 3 6 0 4-3 6 0 4 3 6 0" strokeWidth="2" stroke="#a5a4a3" />
  </svg>
);
const OutwriteIcon = () => (
  <svg viewBox="0 0 32 32" className="size-8"><circle cx="16" cy="16" r="15.500" fill="#e8e3e8" stroke="#a9a7a9" /><path d="M8 20c5-2 8-9 11-8 2 .5 2 4 2 9" fill="none" stroke="#777" strokeWidth="3.500" strokeLinecap="round" /></svg>
);
const AutomateIcon = () => (
  <svg viewBox="0 0 32 32" className="size-8" fill="none" stroke="#9c9b9a">
    <path d="M6 10v20.500h19V9l-7-7.500h-7" strokeWidth="2.500" /><path d="M17.500 1.500V9.500H25" strokeWidth="2" />
    <path d="M4.500 0v11M-1 5.500h11M1 2l7.500 7M8.500 2 1 9" strokeWidth="1.200" />
    <path d="M11 26v-7M15 26V14M19 26v-5M22 26v-8" strokeWidth="2.500" />
  </svg>
);
const AcrobatIcon = () => (
  <svg viewBox="0 0 32 32" className="size-8"><path d="M0 0h32v31H0z" fill="#8c8a8c" /><path d="M16 5c-2.500 0-1.500 5 0 9 1.500 3.500 5 6.500 9 7 3 0 2-3-1-3-5 0-11 1.500-16 4.500-4 2.500-3 5.500-.5 4C11 24 14 17 16 12c1.500-4 1.500-7 0-7z" fill="none" stroke="#efeeef" strokeWidth="1.600" /></svg>
);
const ReuseIcon = () => (
  <svg viewBox="0 0 32 32" className="size-8" fill="none" stroke="#a8a6a4" strokeWidth="1.300"><path d="M2 24V5h24v3M5 26V9h21v6M5 26h9" /><circle cx="20" cy="20" r="6" /><path d="m24 25 6 6" /></svg>
);
const EditorIcon = () => (
  <svg viewBox="0 0 32 32" className="size-8"><path d="M17 9h13l-2 4H15zM14 17h15l-3 4H12zM9 24h12l-3 4H6z" fill="#185abd" /><path d="m18 1 4 2L9 27l-6 4 1-7z" fill="#fff" stroke="#185abd" strokeWidth="1.500" /></svg>
);
const DictateIcon = () => (
  <svg viewBox="0 0 32 32" className="size-8" fill="none"><rect x="11.500" y="1" width="10" height="18" rx="5" fill="#83beec" stroke="#1e6fc0" /><path d="M8 14c0 10 17 10 17 0M16.500 22v7" stroke="#605e5c" strokeWidth="1.300" /></svg>
);
const StylesIcon = () => (
  <svg viewBox="0 0 32 32" className="size-8" fill="none">
    <path d="M2 25 11 5l9 20M5 18h12" stroke="#3b3a39" strokeWidth="2" />
    <path d="M18 23 29 11c2-1 3 0 2 2L21 25z" fill="#fff" stroke="#605e5c" /><path d="M10 30c5-1 3-6 8-7 3 0 4 4 2 6-3 3-7 2-10 1z" fill="#83beec" stroke="#1e6fc0" />
  </svg>
);
const PasteIcon = () => (
  <svg viewBox="0 0 28 30" className="h-[30px] w-7" fill="none">
    <path d="M1 5h20v22H1z" fill="#fff" stroke="#e07b00" strokeWidth="2" /><path d="M6 8V4h3c0-4 5-4 5 0h3v4z" fill="#f3f2f1" stroke="#797775" /><path d="M13.500 12.500h13v17h-13z" fill="#fff" stroke="#3b3a39" />
  </svg>
);
const FormatPainterIcon = () => (
  <svg viewBox="0 0 16 16" className="size-4" fill="none" strokeWidth="1.300">
    <path d="M1 6.500 8 4l5 5-4 6z" fill="#f9c48a" stroke="#d8700a" /><path d="m4 8 2 2M6 7l4 5" stroke="#d8700a" /><path d="m9 4 2-1 4-2.500L13.500 5 13 8z" fill="#fff" stroke="#605e5c" />
  </svg>
);

const Dd = () => <ChevronDown className="size-2 shrink-0 text-[#3b3a39]" strokeWidth={4} />;
const Sep = () => <span className="h-6 w-px shrink-0 bg-[#c8c6c4]" />;
const lineSets = { right: "M2 2h14M6 6h10M2 10h14M6 14h10", center: "M1 2h14M4 6h8M1 10h14M4 14h8", left: "M0 2h15M0 6h10M0 10h15M0 14h10", full: "M1 2h14M1 6h14M1 10h14M1 14h14" };

function Ico({ d, accent, on }: { d: string; accent?: string; on?: boolean }) {
  return (
    <svg viewBox="0 0 16 16" className={on ? "size-4 shrink-0 bg-[#d2d0ce] shadow-[0_0_0_3px_#d2d0ce,0_0_0_4px_#8a8886]" : "size-4 shrink-0"} fill="none" stroke="#3b3a39" strokeWidth="1.200">
      <path d={d} />
      {accent && <path d={accent} stroke="#1e8bcd" strokeWidth="1.500" />}
    </svg>
  );
}

const Glyph = ({ children, on }: { children: React.ReactNode; on?: boolean }) => (
  <button className={on ? "flex size-4 shrink-0 items-center justify-center bg-[#d2d0ce] text-sm leading-4 shadow-[0_0_0_3px_#d2d0ce,0_0_0_4px_#8a8886]" : "flex size-4 shrink-0 items-center justify-center text-sm leading-4"}>
    {children}
  </button>
);

function ParagraphTools() {
  const row = "flex h-6 items-center justify-end gap-2";
  return (
    <div className="pr-[10px] text-[#3b3a39]">
      <div className={row}>
        <Ico d="M4 2h12M10 6h6M10 10h6M4 14h12" accent="M0 8h8M5 5l3 3-3 3" />
        <Ico d="M0 2h14M0 6h6M0 10h6M0 14h14" accent="M7 8h8M12 5l3 3-3 3" />
        <Sep /><Dd />
        <Ico d="M0 2h10M3 7h7M7 12h9" accent="M13 0v4M11.500 6h3v3h-3zM6 11v4" /><Dd />
        <Ico d="M0 2h10M0 8h10M0 14h10" accent="M14 0v4M12 6.500h3L12.500 9.500H15M12 12h3v3.500h-3" /><Dd />
        <Ico d="M0 2h10M0 8h10M0 14h10" accent="M12.500 2h3M12.500 8h3M12.500 14h3" />
      </div>
      <div className={row}>
        <Dd />
        <Ico d="M8 2h8M8 6h8M8 10h8M8 14h8" accent="M3 2v12M.5 4.500 3 2l2.500 2.500M.5 11.500 3 14l2.500-2.500" />
        <Sep /><Dd />
        <Ico d={lineSets.full} /><Ico d={lineSets.left} on /><Ico d={lineSets.center} /><Ico d={lineSets.right} />
      </div>
      <div className={row}>
        <Glyph><b>¶</b></Glyph><Sep />
        <Glyph><span className="flex flex-col text-[9px] leading-2 font-bold"><span className="text-[#1e8bcd]">A</span><span>Z</span></span><span>↓</span></Glyph>
        <Sep /><Dd />
        <Ico d="M1 15.500h14M1 1h1M4 1h1M7.500 1h1M11 1h1M14 1h1M1 8h14M8 1v13M1 4h1M14 4h1M1 11h1M14 11h1" /><Dd />
        <Ico d="M3 8 8 2l5 5-5 5zM8 2V0M1 13.500h14v2H1z" accent="M13 5c2 1 2 3 1.500 6" />
        <Sep />
        <Glyph on><span className="text-[10px] text-[#2b79c2]">›</span><b className="text-xs">¶</b></Glyph>
        <Glyph><b className="text-xs">¶</b><span className="text-[10px] text-[#2b79c2]">‹</span></Glyph>
      </div>
    </div>
  );
}

function FontTools() {
  const row = "flex h-6 items-center justify-end gap-2";
  return (
    <div className="pr-[10px] text-[#3b3a39]">
      <div className="flex h-6 items-center justify-end gap-1 text-xs">
        <label className="relative flex h-[22px] w-[46px] items-center border border-[#c8c6c4] bg-white">
          <span className="absolute left-1"><Dd /></span>
          <select aria-label="Font size" className="w-full appearance-none pr-[3px] text-right"><option>11</option></select>
        </label>
        <label className="relative flex h-[22px] w-[156px] items-center border border-[#c8c6c4] bg-white">
          <span className="absolute left-1"><Dd /></span>
          <select aria-label="Font" className="w-full appearance-none pl-4 text-left"><option>Calibri (النص الأساسي)</option></select>
        </label>
      </div>
      <div className={row}>
        <Glyph>A<Eraser className="-ml-1 size-[10px] shrink-0 self-end text-[#a33ea1]" /></Glyph>
        <Sep />
        <Glyph><b>x</b><sup className="text-[8px] text-[#1e8bcd]">2</sup></Glyph>
        <Glyph><b>x</b><sub className="text-[8px] text-[#1e8bcd]">2</sub></Glyph>
        <Glyph><s className="text-[13px]">ab</s></Glyph><Dd />
        <Glyph><u>U</u></Glyph>
        <Glyph><i className="font-['Liberation_Serif']">I</i></Glyph>
        <Glyph><b>B</b></Glyph>
      </div>
      <div className={row}>
        <Glyph>A<svg viewBox="0 0 6 4" className="h-1 w-[6px] shrink-0 self-start" fill="none" stroke="#1e8bcd" strokeWidth="1.300"><path d="m.5.500 2.500 2.500L5.500.5" /></svg></Glyph>
        <Glyph>A<svg viewBox="0 0 6 4" className="h-1 w-[6px] shrink-0 self-start" fill="none" stroke="#1e8bcd" strokeWidth="1.300"><path d="m.5 3.500 2.500-2.500 2.500 2.500" /></svg></Glyph>
        <Sep /><Dd />
        <Glyph><span className="text-[13px]">Aa</span></Glyph><Dd />
        <button className="h-[18px] w-4 shrink-0 border-b-4 border-[#605e5c] text-sm leading-[14px]">A</button><Dd />
        <button aria-label="Highlight" className="h-[18px] w-4 shrink-0 border-b-4 border-[#ffff00]"><Pencil className="size-[14px]" strokeWidth={1.8} /></button><Dd />
        <Glyph><b className="text-base text-[#b8b6b4]">A</b></Glyph>
      </div>
    </div>
  );
}

function Ribbon() {
  return (
    <div className="grid h-[95px] shrink-0 grid-cols-[27fr_64fr_66fr_60fr_70fr_76fr_78fr_98fr_58fr_58fr_55fr_58fr_209fr_223fr_80fr] border-b border-[#c8c6c4] bg-[#f3f2f1] pt-[3px]">
      <div className="flex items-end justify-center pb-1"><button aria-label="Collapse ribbon"><ChevronUp className="size-[11px]" strokeWidth={2.5} /></button></div>
      <Group label="Soda PDF"><BigButton muted icon={<SodaIcon />} lines={["Convert", "to PDF"]} /></Group>
      <Group label="Writer"><BigButton muted icon={<WriterIcon />} lines={["Check", "Content"]} /></Group>
      <Group label="Languag..."><BigButton muted icon={<LanguageToolIcon />} lines={["Check", "Text"]} /></Group>
      <Group label="Outwrite"><BigButton muted icon={<OutwriteIcon />} lines={["Open", "Outwrite"]} /></Group>
      <Group label="AnalysisPlace"><BigButton muted icon={<AutomateIcon />} lines={["Automate", "Content"]} /></Group>
      <Group label="Adobe"><BigButton muted icon={<AcrobatIcon />} lines={["Document", "Cloud"]} /></Group>
      <Group label="إعادة استخدام ال..."><BigButton muted icon={<ReuseIcon />} lines={["إعادة استخدام", "الملفات"]} /></Group>
      <Group label="المحرر"><BigButton icon={<EditorIcon />} lines={["المحرر"]} /></Group>
      <Group label="صوت"><BigButton icon={<DictateIcon />} lines={["إملاء"]} /></Group>
      <Group label="">
        <button className="flex w-full flex-col items-center text-[11px] leading-[22px] text-[#3b3a39]">
          <span className="flex h-[31px] w-8 items-center justify-center border border-[#8a8886] bg-white"><LoupeIcon /></span>
          تحرير
          <Dd />
        </button>
      </Group>
      <Group label="أنماط" launcher>
        <button className="flex w-full flex-col items-center pt-[2px] text-[11px] leading-[22px] text-[#3b3a39]"><StylesIcon />أنماط<Dd /></button>
      </Group>
      <Group label="فقرة" launcher><ParagraphTools /></Group>
      <Group label="خط" launcher><FontTools /></Group>
      <Group label="الحافظة" launcher>
        <div className="flex justify-end gap-4 pr-3 text-[#3b3a39]">
          <div className="flex flex-col">
            <button aria-label="Cut" className="flex h-6 items-center text-[#a19f9d]"><Scissors className="size-[15px] -rotate-90" strokeWidth={1.5} /></button>
            <button aria-label="Copy" className="flex h-6 items-center text-[#a19f9d]"><Copy className="size-[15px]" strokeWidth={1.5} /></button>
            <button aria-label="Format painter" className="flex h-6 items-center"><FormatPainterIcon /></button>
          </div>
          <button className="flex flex-col items-center pt-1 text-[11px] leading-[22px]"><PasteIcon />لصق<Dd /></button>
        </div>
      </Group>
    </div>
  );
}

function DocumentArea() {
  return (
    <div className="flex min-h-0 flex-1 justify-center bg-[#e6e6e6] pt-[18px] pr-[225px] pl-60">
      <article className="w-full max-w-[816px] border border-b-0 border-[#c6c6c6] bg-white px-[93px] pt-[93px] font-['Lato'] text-sm">
        <h1 className="text-center text-[23px] leading-8 font-bold text-black">Mahmoud Gamal</h1>
        <p className="mt-[10px] border-b border-black pb-px text-center leading-[19px] text-[#595959]">Assiut, Egypt</p>
        <div className="mt-[6px] grid grid-cols-[425fr_203fr] leading-[30px] text-[#0563c1]">
          <div className="pl-[2px]"><a href="#linkedin" className="underline underline-offset-2">www.linkedin.com/in/mahmoud-gamal-55a933166</a></div>
          <div><a href="#github" className="underline underline-offset-2">https://github.com/roone858</a></div>
          <div className="pl-[2px] text-[13px] text-black">00201140192314 `</div>
          <div><a href="#mail" className="underline underline-offset-2">mahmoudg.dev@gmail.com</a></div>
        </div>
      </article>
    </div>
  );
}

function StatusBar() {
  return (
    <footer className="flex h-[22px] shrink-0 items-center border-t border-[#c8c6c4] bg-[#f3f2f1] pr-[9px] pl-[10px] text-xs whitespace-nowrap text-[#484644]">
      <span className="w-[34px] text-[11px]">100%</span>
      <button aria-label="Zoom in" className="px-1 text-sm leading-4">+</button>
      <input type="range" aria-label="Zoom" className="h-px w-[100px] appearance-none bg-[#605e5c] [&::-webkit-slider-thumb]:h-[11px] [&::-webkit-slider-thumb]:w-1 [&::-webkit-slider-thumb]:appearance-none [&::-webkit-slider-thumb]:bg-[#3b3a39]" />
      <button aria-label="Zoom out" className="px-1 text-sm leading-4">−</button>
      <button aria-label="Web layout" className="flex w-10 justify-center">
        <svg viewBox="0 0 14 14" className="size-[14px]" fill="none" stroke="#484644"><path d="M13 6V.5H.5v11H6M2 3h9M2 5.500h6M2 8h4" /><circle cx="10" cy="10" r="3.500" /><path d="M6.500 10h7M10 6.500v7" /></svg>
      </button>
      <button aria-label="Print layout" className="flex h-full w-10 items-center justify-center bg-[#d2d0ce]">
        <svg viewBox="0 0 12 14" className="h-[14px] w-3" fill="none" stroke="#484644"><path d="M.5.500h11v13H.5zM2.500 3.500h7M2.500 5.500h7M2.500 7.500h7M2.500 9.500h7M2.500 11.500h7" /></svg>
      </button>
      <button aria-label="Read mode" className="flex w-10 justify-center">
        <svg viewBox="0 0 14 14" className="size-[14px]" fill="none" stroke="#484644"><path d="M7 2C5 1 2.500 1 .5 1.500v10c2-.5 4.500-.5 6.500.5 2-1 4.500-1 6.500-.5v-10C11.500 1 9 1 7 2zM7 2v11M2 4h3.500M2 6.500h3.500M2 9h3.500M8.500 4H12M8.500 6.500H12M8.500 9H12" /></svg>
      </button>
      <button className="ml-3 flex items-center gap-1">
        التركيز
        <svg viewBox="0 0 14 14" className="size-[14px]" fill="none" stroke="#484644"><path d="M3 .5H.5v13H3M11 13.500h2.500V10M3.500 3.500h4l3 3v5h-7zM7.500 3.500v3h3" /></svg>
      </button>
      <div className="flex-1" />
      <div className="flex items-center">
        <button className="flex items-center gap-1"><span dir="rtl">إمكانية الوصول: غير متاحة</span><PersonStanding className="size-[14px]" strokeWidth={1.5} /></button>
        <span dir="rtl" className="ml-5">توقعات النص: قيد التشغيل</span>
        <span dir="rtl" className="ml-5">الإنجليزية (الولايات المتحدة)</span>
        <BookOpen className="ml-4 size-[14px]" strokeWidth={1.5} />
        <span dir="rtl" className="ml-5">9 كلمات</span>
        <span dir="rtl" className="ml-[26px]">الصفحة 1 من 1</span>
      </div>
    </footer>
  );
}

function BottomTaskbar() {
  return (
    <nav aria-label="Taskbar" className="flex h-[30px] shrink-0 items-stretch bg-[#101010] pr-[10px] font-['Open_Sans','DejaVu_Sans',sans-serif] text-xs text-white">
      {pinned.map((p) => (
        <button
          key={p.name}
          aria-label={p.name}
          className={p.state === "active" ? "relative flex w-[37px] items-center justify-center bg-[#333333]" : "relative flex w-[37px] items-center justify-center"}
        >
          {p.icon}
          {p.state === "active" && <span className="absolute inset-x-0 bottom-0 h-[2px] bg-[#a6d8ff]" />}
          {p.state === "open" && <span className="absolute inset-x-1 bottom-0 h-[2px] bg-[#a6d8ff]" />}
          {p.state === "multi" && <span className="absolute inset-x-1 bottom-0 h-[2px] border-r-8 border-[#76a2c4] bg-[#a6d8ff]" />}
        </button>
      ))}
      <span className="ml-auto self-center">4:13 PM</span>
    </nav>
  );
}

export default function App() {
  return (
    <div className="grid h-screen grid-cols-[1366fr_1280fr] overflow-hidden bg-black">
      <div className="flex h-3/4 min-w-0 font-['Open_Sans','DejaVu_Sans',sans-serif]">
        <SideTaskbar />
        <Browser />
      </div>
      <div className="flex min-h-0 min-w-0 flex-col font-['DejaVu_Sans_Condensed','DejaVu_Sans',sans-serif]">
        <WordTitleBar />
        <WordTabs />
        <Ribbon />
        <DocumentArea />
        <StatusBar />
        <BottomTaskbar />
      </div>
    </div>
  );
}
